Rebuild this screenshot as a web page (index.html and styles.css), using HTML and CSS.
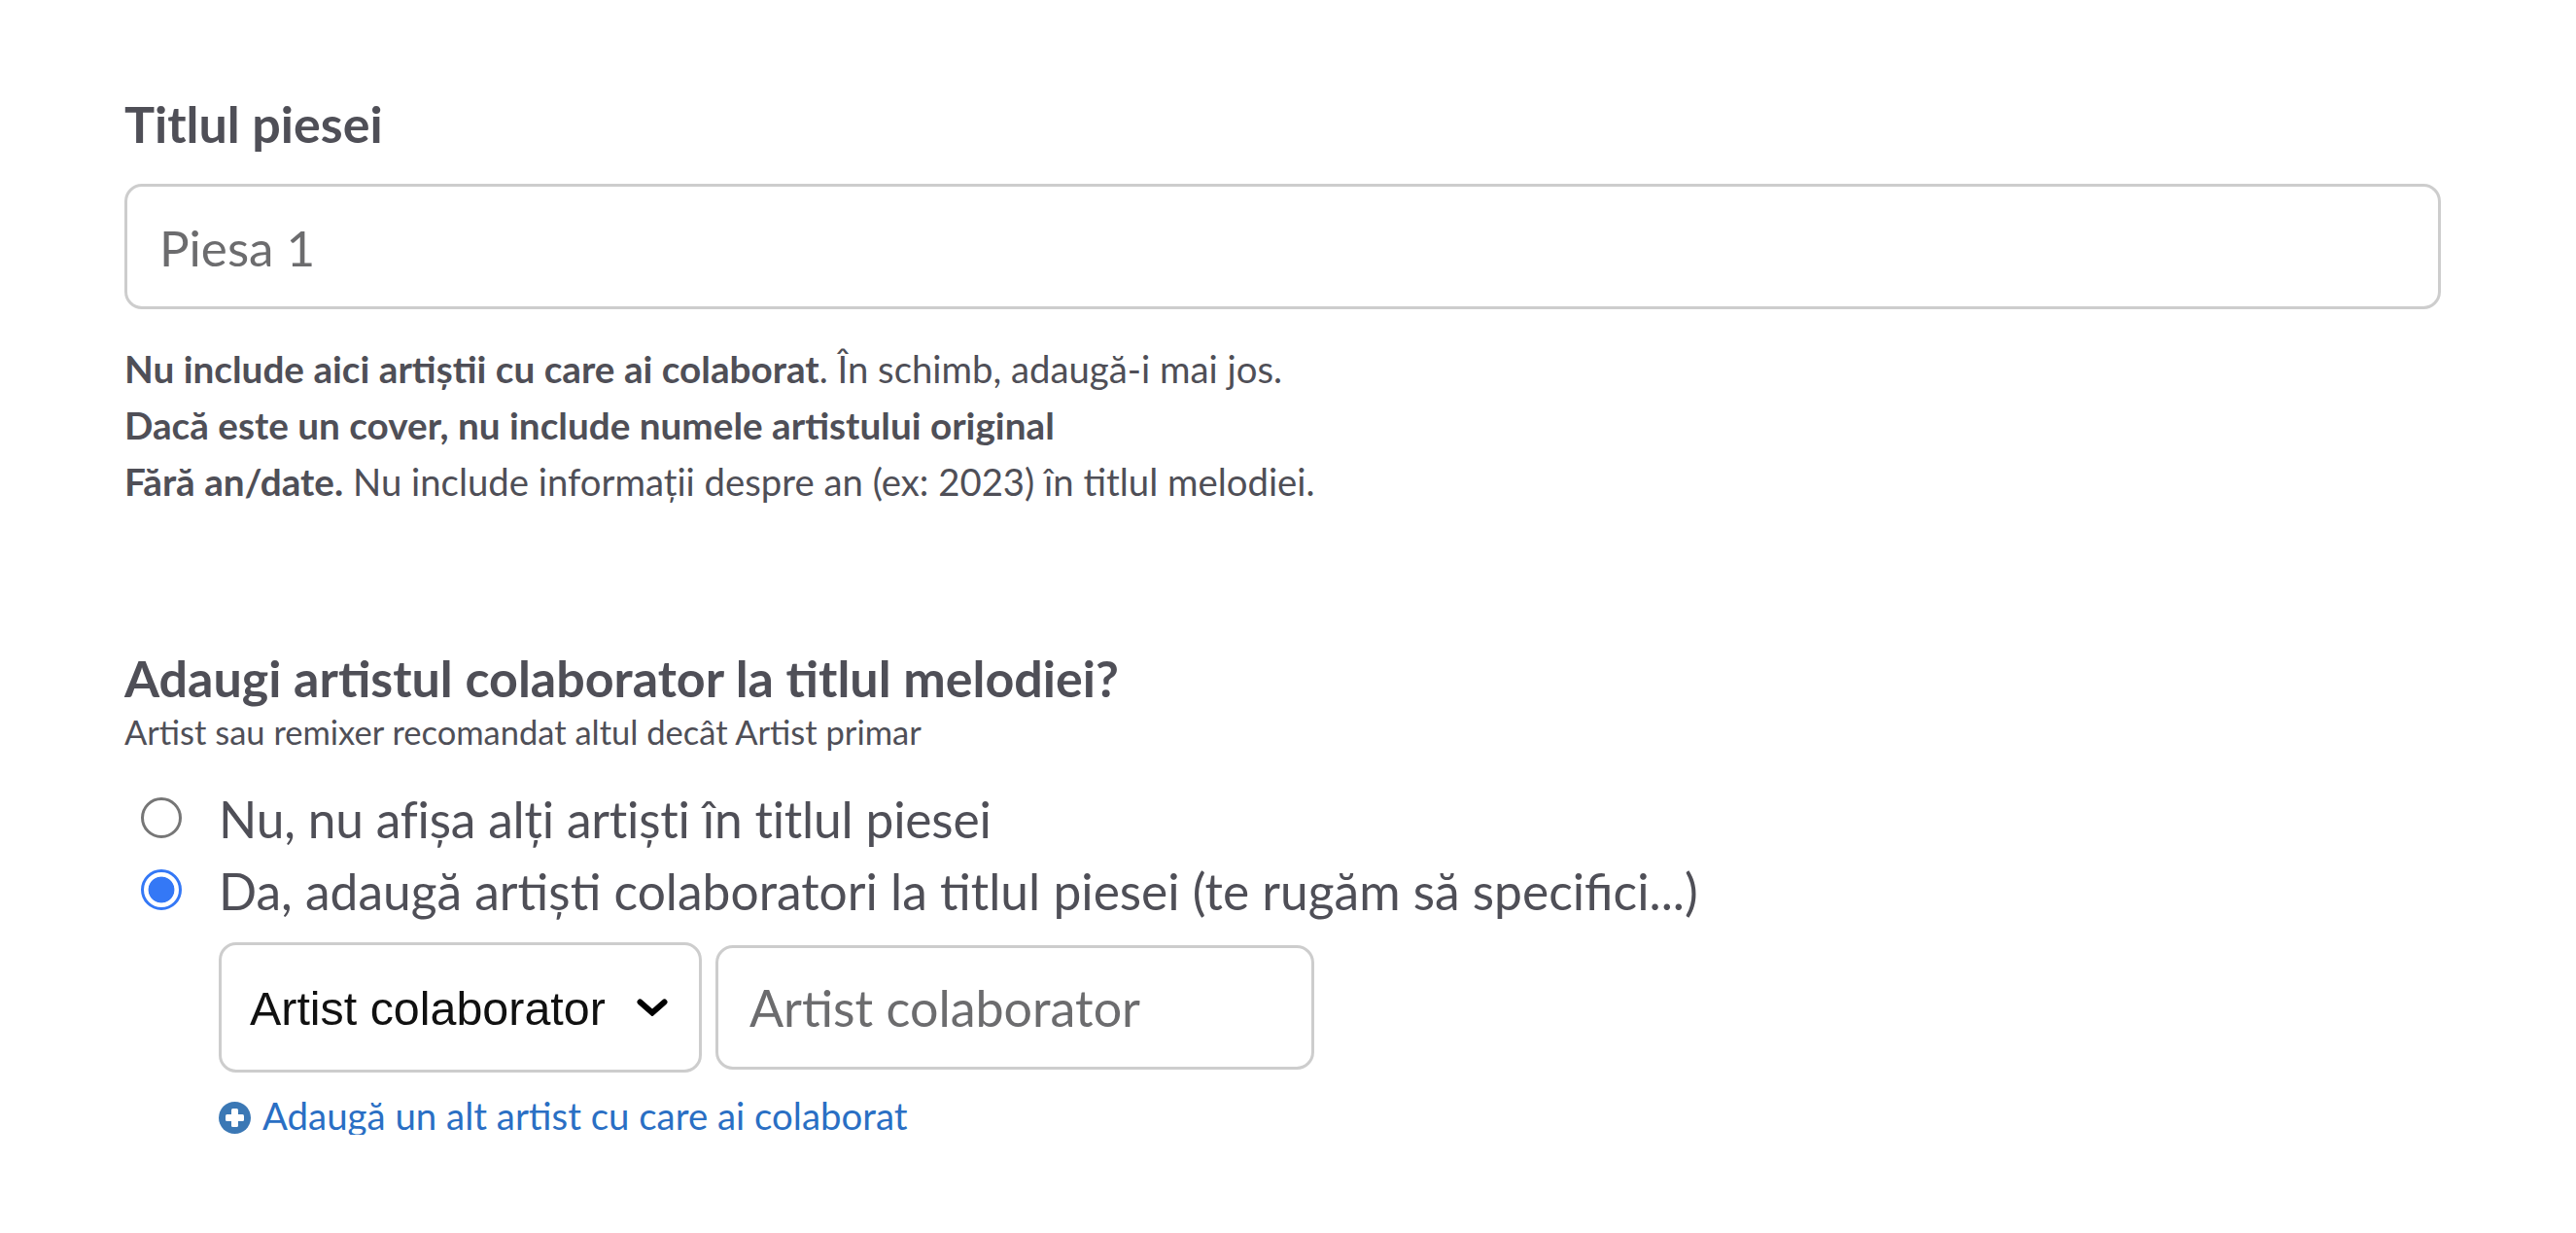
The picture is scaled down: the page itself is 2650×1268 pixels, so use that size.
FILE: index.html
```html
<!DOCTYPE html>
<html lang="ro">
<head>
<meta charset="utf-8">
<title>Titlul piesei</title>
<link rel="stylesheet" href="styles.css">
</head>
<body>
<form class="form">
  <section class="title-section">
    <label class="heading" for="title">Titlul piesei</label>
    <input class="field field-wide" id="title" type="text" placeholder="Piesa 1">
    <div class="help">
      <p><b>Nu include aici artiștii cu care ai colaborat</b>. În schimb, adaugă-i mai jos.</p>
      <p><b>Dacă este un cover, nu include numele artistului original</b></p>
      <p><b>Fără an/date.</b> Nu include informații despre an (ex: 2023) în titlul melodiei.</p>
    </div>
  </section>
  <section class="collab-section">
    <h2 class="heading">Adaugi artistul colaborator la titlul melodiei?</h2>
    <p class="sub">Artist sau remixer recomandat altul decât Artist primar</p>
    <div class="options">
      <label class="option"><input class="radio" type="radio" name="collab"><span class="option-text option-text-tight">Nu, nu afișa alți artiști în titlul piesei</span></label>
      <label class="option"><input class="radio" type="radio" name="collab" checked><span class="option-text">Da, adaugă artiști colaboratori la titlul piesei (te rugăm să specifici...)</span></label>
    </div>
    <div class="indent">
      <div class="artist-row">
        <div class="select-wrap">
          <select class="select"><option>Artist colaborator</option></select>
          <svg class="chevron" viewBox="0 0 32 18" aria-hidden="true"><path d="M3.500 3.500L16 14.500L28.500 3.500" fill="none" stroke="#000" stroke-width="6" stroke-linecap="round"/></svg>
        </div>
        <input class="field field-artist" type="text" placeholder="Artist colaborator">
      </div>
      <a class="add-link" href="#">
        <svg class="plus" viewBox="0 0 33 33" aria-hidden="true"><circle cx="16.500" cy="16.500" r="16.500" fill="#3b78b5"/><rect x="13" y="7" width="7" height="19" rx="1.500" fill="#fff"/><rect x="7" y="13" width="19" height="7" rx="1.500" fill="#fff"/></svg>
        <span>Adaugă un alt artist cu care ai colaborat</span>
      </a>
    </div>
  </section>
</form>
</body>
</html>
```
FILE: styles.css
```css
* { box-sizing: border-box; }
html, body { margin: 0; padding: 0; background: #fff; }
body { font-family: Lato, "Noto Sans", sans-serif; color: #4f4f57; }
.form { padding: 94px 0 0 128px; width: 2511px; }
p { margin: 0; }
.heading { display: block; margin: 0; font-size: 52px; line-height: 66px; font-weight: 700; color: #4f4f57; }
.field {
  display: block; border: 3px solid #cdcdcd; border-radius: 18px; background: #fff;
  font-family: Lato, sans-serif; color: #4f4f57; outline: none;
}
.field::placeholder { color: #6c6c6e; opacity: 1; }
.field-wide { width: 100%; height: 129px; margin-top: 29px; padding: 0 33px; font-size: 51.2px; }
.help { margin-top: 32px; font-size: 38.3px; line-height: 58px; }
.help b { font-weight: 700; font-size: 38.7px; }
.collab-section { margin-top: 140px; }
.sub { font-size: 34.5px; line-height: 44px; margin-top: 1px; }
.options { margin-top: 29px; display: flex; flex-direction: column; }
.option { display: flex; align-items: center; height: 74px; padding-left: 17px; font-size: 51.5px; gap: 38px; }
.option-text { padding-top: 2px; }
.option-text-tight { letter-spacing: -0.2px; }
.radio {
  appearance: none; margin: 0; flex: none; width: 42px; height: 42px; border-radius: 50%;
  border: 3px solid #767676; background: #fff;
}
.radio:checked { border: 3.5px solid #3478f6; background: radial-gradient(circle, #3478f6 0 13px, #fff 13.8px); }
.indent { padding-left: 97px; }
.artist-row { display: flex; align-items: center; gap: 14px; margin-top: 17px; }
.select-wrap { position: relative; flex: none; }
.select {
  display: block; appearance: none; width: 497px; height: 134px; padding: 2px 0 0 29px;
  border: 3px solid #cdcdcd; border-radius: 18px; background: #fff;
  font-family: "Liberation Sans", Arial, sans-serif; font-size: 48.4px; color: #111;
}
.chevron { position: absolute; right: 35px; top: 58px; width: 32px; height: 18px; }
.field-artist { width: 616px; height: 128px; padding: 0 32px; font-size: 52px; }
.add-link { display: flex; align-items: center; gap: 12px; margin-top: 24px; color: #2a6fc4; text-decoration: none; font-size: 38.4px; line-height: 40px; }
.plus { width: 33px; height: 33px; flex: none; margin-top: 5px; }
```
